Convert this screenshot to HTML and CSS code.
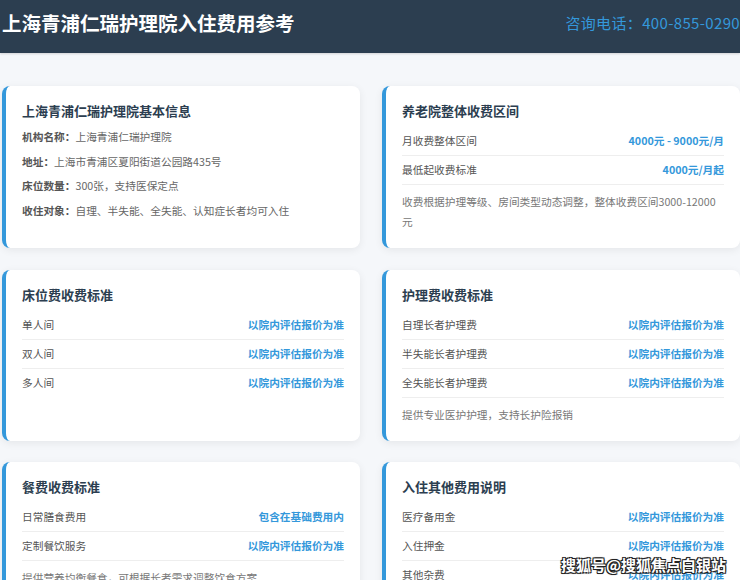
FILE: index.html
```html
<!DOCTYPE html>
<html lang="zh-CN">
<head>
<meta charset="utf-8">
<title>上海青浦仁瑞护理院入住费用参考</title>
<link rel="stylesheet" href="styles.css">
</head>
<body>
<header class="top">
  <h1 class="top-title">上海青浦仁瑞护理院入住费用参考</h1>
  <div class="top-phone">咨询电话：400-855-0290</div>
</header>
<main class="grid">
  <section class="card">
    <h2 class="card-title">上海青浦仁瑞护理院基本信息</h2>
    <p class="info"><b>机构名称：</b>上海青浦仁瑞护理院</p>
    <p class="info"><b>地址：</b>上海市青浦区夏阳街道公园路435号</p>
    <p class="info"><b>床位数量：</b>300张，支持医保定点</p>
    <p class="info"><b>收住对象：</b>自理、半失能、全失能、认知症长者均可入住</p>
  </section>
  <section class="card">
    <h2 class="card-title">养老院整体收费区间</h2>
    <div class="row"><span>月收费整体区间</span><span class="val">4000元 - 9000元/月</span></div>
    <div class="row"><span>最低起收费标准</span><span class="val">4000元/月起</span></div>
    <p class="note">收费根据护理等级、房间类型动态调整，整体收费区间3000-12000元</p>
  </section>
  <section class="card">
    <h2 class="card-title">床位费收费标准</h2>
    <div class="row"><span>单人间</span><span class="val">以院内评估报价为准</span></div>
    <div class="row"><span>双人间</span><span class="val">以院内评估报价为准</span></div>
    <div class="row"><span>多人间</span><span class="val">以院内评估报价为准</span></div>
  </section>
  <section class="card">
    <h2 class="card-title">护理费收费标准</h2>
    <div class="row"><span>自理长者护理费</span><span class="val">以院内评估报价为准</span></div>
    <div class="row"><span>半失能长者护理费</span><span class="val">以院内评估报价为准</span></div>
    <div class="row"><span>全失能长者护理费</span><span class="val">以院内评估报价为准</span></div>
    <p class="note">提供专业医护护理，支持长护险报销</p>
  </section>
  <section class="card">
    <h2 class="card-title">餐费收费标准</h2>
    <div class="row"><span>日常膳食费用</span><span class="val">包含在基础费用内</span></div>
    <div class="row"><span>定制餐饮服务</span><span class="val">以院内评估报价为准</span></div>
    <p class="note">提供营养均衡餐食，可根据长者需求调整饮食方案</p>
  </section>
  <section class="card">
    <h2 class="card-title">入住其他费用说明</h2>
    <div class="row"><span>医疗备用金</span><span class="val">以院内评估报价为准</span></div>
    <div class="row"><span>入住押金</span><span class="val">以院内评估报价为准</span></div>
    <div class="row"><span>其他杂费</span><span class="val">以院内评估报价为准</span></div>
    <p class="note">具体费用以入住评估后院方报价为准</p>
  </section>
</main>
<div class="watermark">搜狐号@搜狐焦点白银站</div>
</body>
</html>
```
FILE: styles.css
```css
* { box-sizing: border-box; }
html, body { margin: 0; padding: 0; }
body {
  background: #f5f7fa;
  font-family: "Noto Sans CJK SC", "Noto Sans", sans-serif;
  width: 740px;
  overflow: hidden;
  height: 580px;
  position: relative;
}
.top {
  height: 53px;
  background: #2c3e50;
  display: flex;
  align-items: center;
  justify-content: space-between;
  padding: 0 0 0 2px;
  box-shadow: 0 1px 2px rgba(0,0,0,0.15);
}
.top-title {
  margin: 0;
  color: #fff;
  font-size: 19.5px;
  font-weight: 700;
  line-height: 1;
  position: relative;
  top: -4px;
}
.top-phone {
  color: #3498db;
  font-size: 15px;
  letter-spacing: 0.35px;
  line-height: 1;
  white-space: nowrap;
  position: relative;
  top: -4px;
}
.grid {
  display: grid;
  grid-template-columns: 358px 358px;
  column-gap: 22px;
  row-gap: 21.5px;
  padding: 33px 0 0 2px;
}
.card {
  background: #fff;
  border-left: 4px solid #3498db;
  border-radius: 8px;
  padding: 16px;
  box-shadow: 0 2px 8px rgba(0,0,0,0.07);
}
.card-title {
  margin: 0 0 7px;
  font-size: 13px;
  line-height: 18px;
  font-weight: 700;
  color: #2c3e50;
}
.info {
  margin: 0 0 5px;
  font-size: 10.7px;
  line-height: 19.7px;
  color: #666;
}
.info b { color: #555; font-weight: 700; }
.row {
  display: flex;
  justify-content: space-between;
  align-items: center;
  padding: 8px 0;
  font-size: 10.7px;
  line-height: 12px;
  color: #555;
  border-bottom: 1px solid #eeeeee;
}
.row:last-child { border-bottom: none; }
.val {
  color: #3498db;
  font-weight: 700;
}
.note {
  margin: 7px 0 0;
  font-size: 10.7px;
  line-height: 20px;
  color: #777;
}
.watermark {
  position: absolute;
  left: 561px;
  top: 553px;
  font-size: 15px;
  line-height: 24px;
  font-weight: 700;
  color: #fff;
  white-space: nowrap;
  text-shadow: -1px -1px 0 #222, 1px -1px 0 #222, -1px 1px 0 #222, 1px 1px 0 #222, 0 0 2px #000;
}
```
